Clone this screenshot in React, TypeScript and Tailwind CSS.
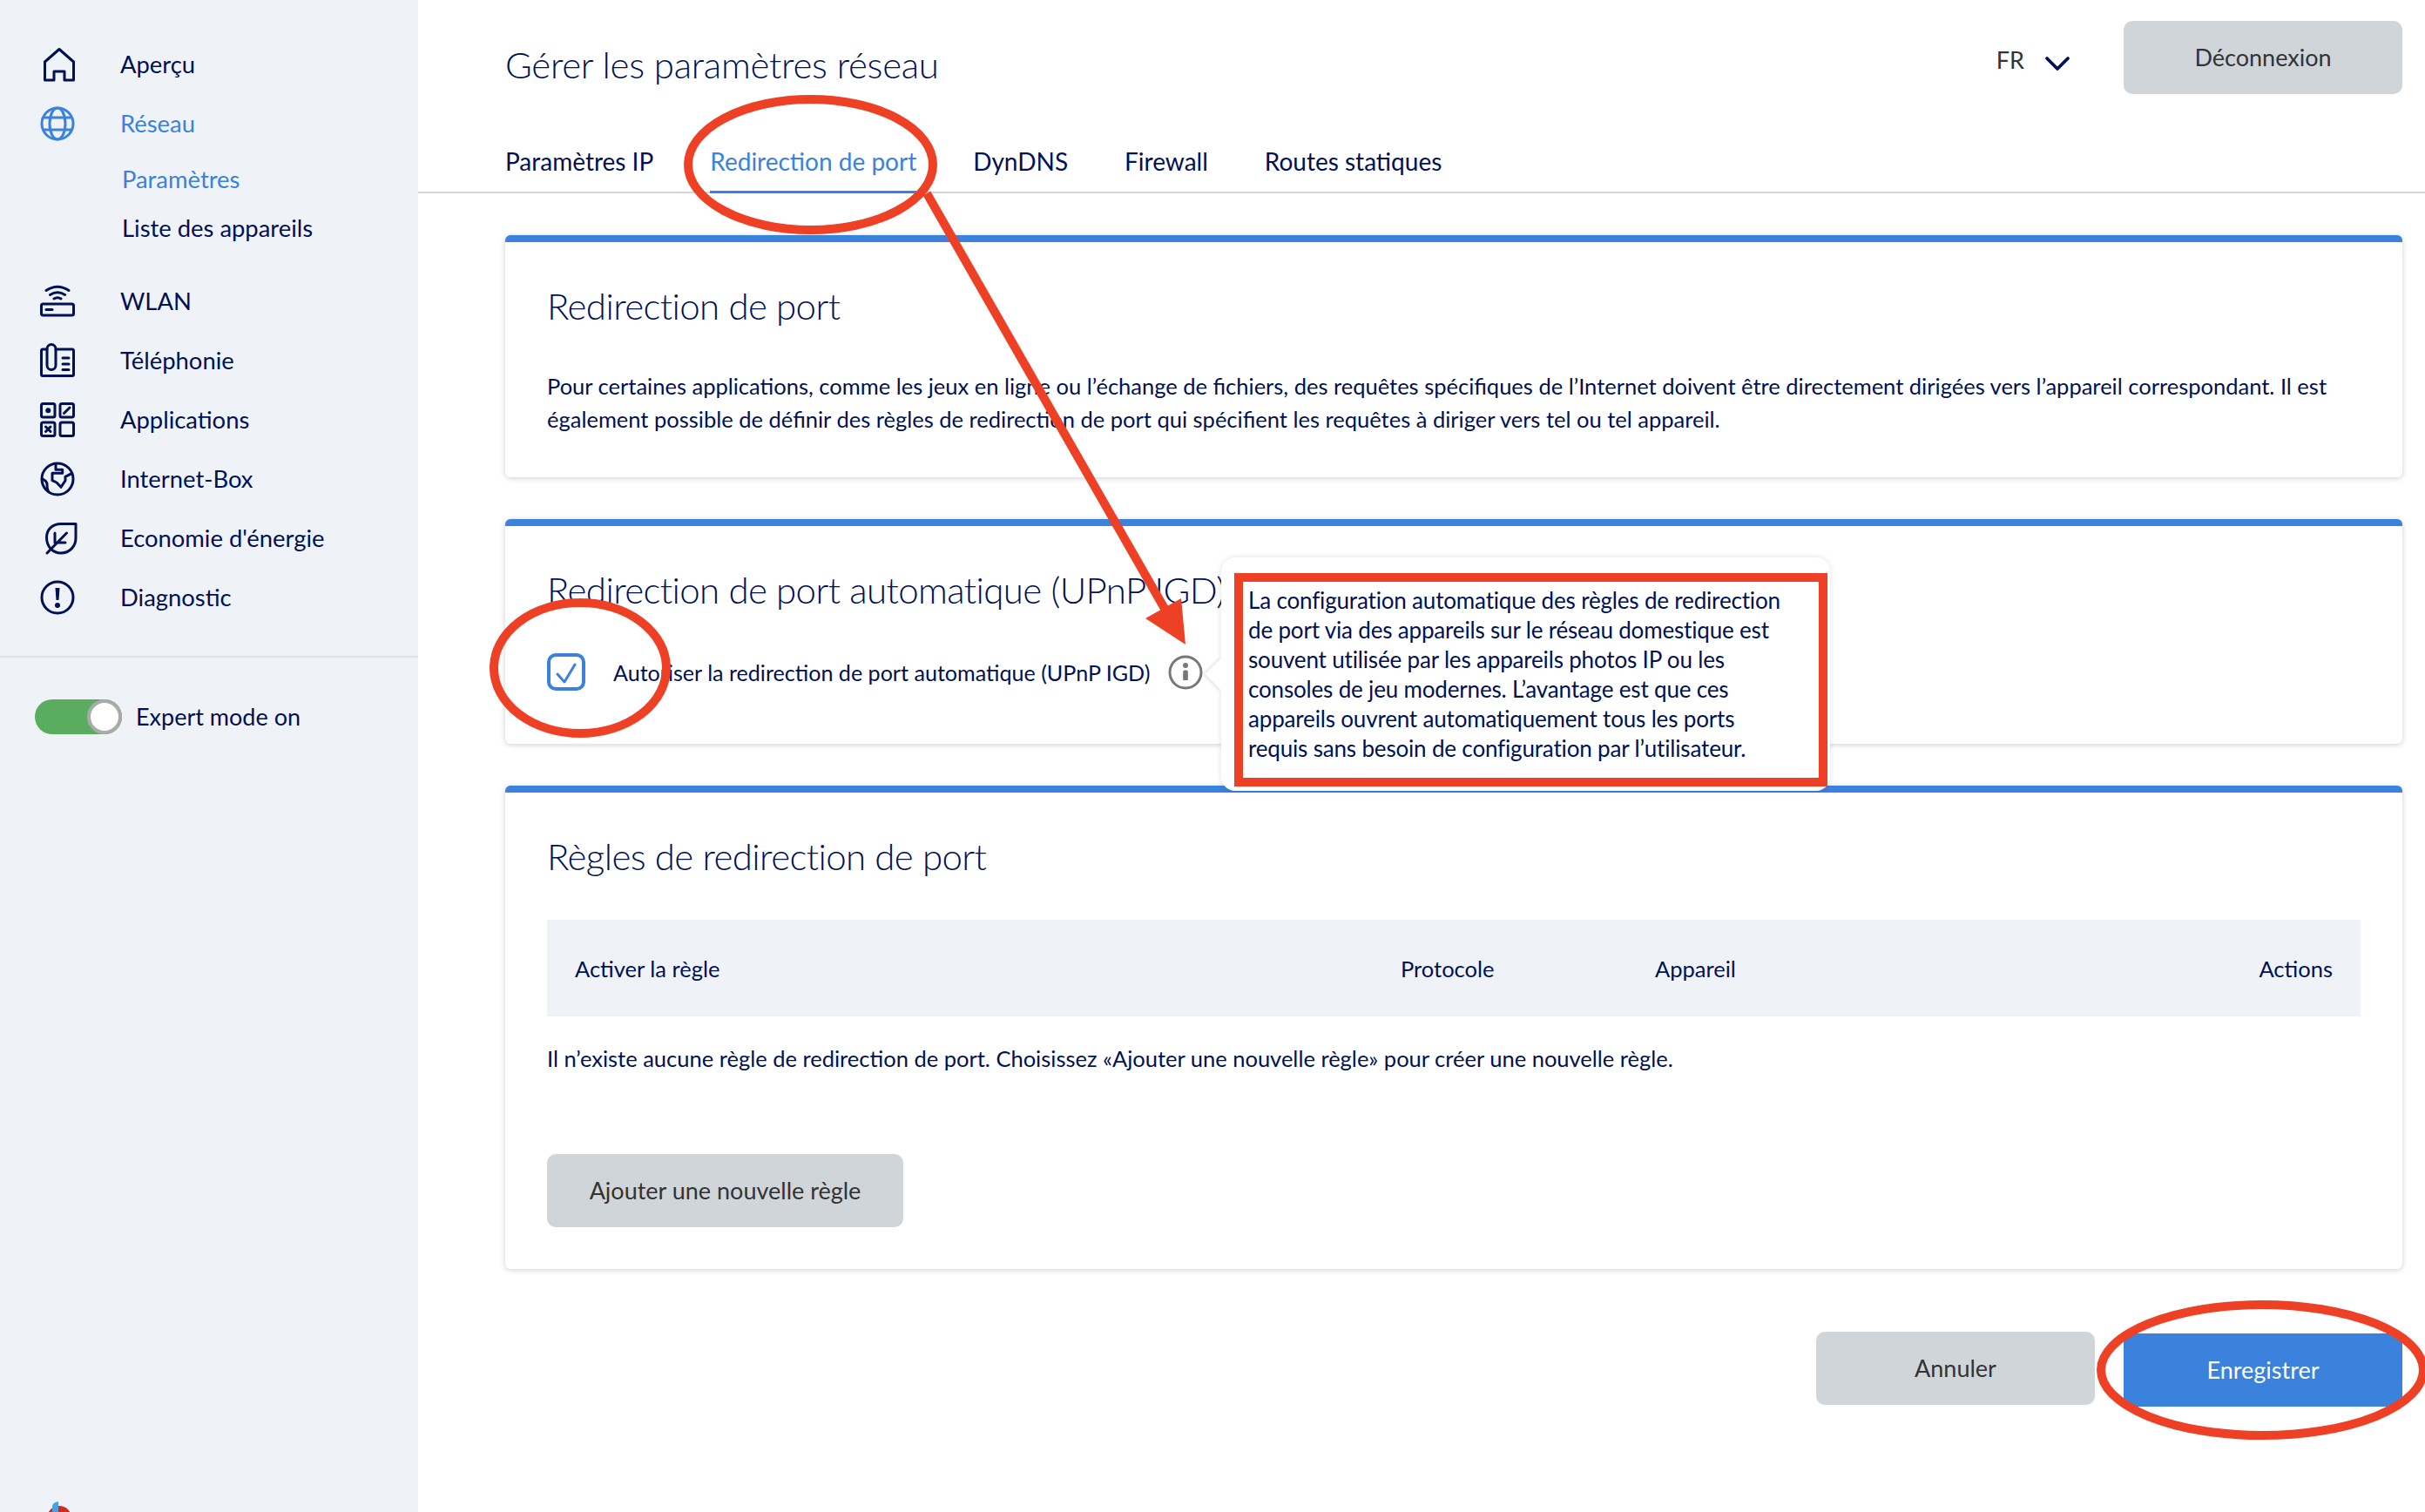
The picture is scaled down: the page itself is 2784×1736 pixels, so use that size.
import type { ReactNode } from 'react';
import { ChevronDown } from 'lucide-react';

const navy = '#001155';

function HomeIcon() {
  return (
    <svg width="40" height="40" viewBox="0 0 40 40" fill="none" stroke={navy} strokeWidth="3" strokeLinejoin="round">
      <path d="M22 2.5 L38.5 17 V38 H28 V28 H16 V38 H5.5 V17 Z" />
    </svg>
  );
}

function GlobeIcon() {
  return (
    <svg width="40" height="40" viewBox="0 0 40 40" fill="none" stroke="#3a82dc" strokeWidth="3">
      <circle cx="20" cy="20" r="18" />
      <ellipse cx="20" cy="20" rx="9" ry="18" />
      <path d="M4 13 H36 M4 27 H36" />
    </svg>
  );
}

function WlanIcon() {
  return (
    <svg width="40" height="40" viewBox="0 0 40 40" fill="none" stroke={navy} strokeWidth="3" strokeLinecap="round">
      <rect x="1.5" y="23" width="37" height="13" rx="2" />
      <path d="M7 29.5 H14" />
      <path d="M7 7.5 Q20 -1 33 7.5 M11.5 12.5 Q20 7 28.5 12.5 M16 17 Q20 14.5 24 17" />
    </svg>
  );
}

function PhoneIcon() {
  return (
    <svg width="40" height="40" viewBox="0 0 40 40" fill="none" stroke={navy} strokeWidth="3" strokeLinecap="round">
      <path d="M8 7 H3 Q1.5 7 1.5 9 V36 Q1.5 37.5 3 37.5 H37 Q38.5 37.5 38.5 36 V9 Q38.5 7 37 7 H18" />
      <rect x="8" y="1.5" width="10" height="29" rx="5" />
      <path d="M26 17 H33 M26 24 H33 M26 30.5 H33" />
    </svg>
  );
}

function AppsIcon() {
  return (
    <svg width="40" height="40" viewBox="0 0 40 40" fill="none" stroke={navy} strokeWidth="3">
      <rect x="1.5" y="1.5" width="15.5" height="15.5" rx="2" />
      <rect x="23" y="1.5" width="15.5" height="15.5" rx="2" />
      <rect x="1.5" y="23" width="15.5" height="15.5" rx="2" />
      <rect x="23" y="23" width="15.5" height="15.5" rx="2" />
      <circle cx="9.25" cy="9.25" r="3" fill={navy} stroke="none" />
      <path d="M27.5 12.5 L34 6 M6.5 28 L12 33.5 M12 28 L6.5 33.5" strokeLinecap="round" />
    </svg>
  );
}

function EarthIcon() {
  return (
    <svg width="40" height="40" viewBox="0 0 40 40" fill="none" stroke={navy} strokeWidth="3" strokeLinejoin="round">
      <circle cx="20" cy="20" r="18" />
      <path d="M18 2.5 V9.3 H25.7 V13.3 H14 V21.7 L19 24 L24 29.3 L29 21.7 V17.3 L36.7 13.3" />
      <path d="M1.5 19.3 Q8 22 8 26 Q8 32 10 35" />
    </svg>
  );
}

function LeafIcon() {
  return (
    <svg className="overflow-visible" width="40" height="40" viewBox="0 0 40 40" fill="none" stroke={navy} strokeWidth="3" strokeLinecap="round" strokeLinejoin="round">
      <path d="M41 3.5 H24 C14 3.5 7.5 10 7.5 19 C7.5 30 15 37 24 37 C34 37 41 29 41 20 Z" />
      <path d="M8 37 L30.5 14 M17 14 V25 H29" />
    </svg>
  );
}

function AlertIcon() {
  return (
    <svg width="40" height="40" viewBox="0 0 40 40" fill="none" stroke={navy} strokeWidth="3">
      <circle cx="20" cy="20" r="18" />
      <path d="M17.5 9 H22.5 L21.5 23 H18.5 Z" fill={navy} stroke="none" />
      <circle cx="20" cy="29" r="3" fill={navy} stroke="none" />
    </svg>
  );
}

function InfoIcon() {
  return (
    <svg width="40" height="40" viewBox="0 0 40 40" fill="none" stroke="#777777" strokeWidth="3">
      <circle cx="20" cy="20" r="18" />
      <circle cx="20" cy="12" r="3" fill="#777777" stroke="none" />
      <path d="M17.2 19 Q17.2 17.5 19 17.5 H21 Q22.8 17.5 22.8 19 V29 H17.2 Z" fill="#777777" stroke="none" />
    </svg>
  );
}

function NavItem({ icon, label, active }: { icon: ReactNode; label: string; active?: boolean }) {
  return (
    <div className={`flex h-[68px] items-center gap-[52px] pl-[46px] ${active ? 'text-[#3a82dc]' : 'text-[#001155]'}`}>
      <span className="flex h-[40px] w-[40px] shrink-0">{icon}</span>
      <span>{label}</span>
    </div>
  );
}

function Card({ title, children, className }: { title: string; children: ReactNode; className: string }) {
  return (
    <section className={`rounded-[6px] border-t-[8px] border-[#3a82dc] bg-white px-[48px] pt-[43px] text-[25.5px] shadow-[0_1px_6px_rgba(0,0,0,0.2)] ${className}`}>
      <h2 className="h-[60px] text-[42px] leading-[60px] font-light tracking-[-0.6px] whitespace-nowrap text-[#001155]">{title}</h2>
      {children}
    </section>
  );
}

export default function App() {
  return (
    <div className="relative flex h-[1736px] w-[2784px] overflow-hidden bg-white font-['Lato',sans-serif] text-[27px] leading-[38px] text-[#001155]">
      <aside className="relative flex w-[480px] shrink-0 flex-col bg-[#eff3f7] pt-[40px] text-[27.4px]">
        <NavItem icon={<HomeIcon />} label="Aperçu" />
        <NavItem icon={<GlobeIcon />} label="Réseau" active />
        <div className="mt-[2px] pl-[140px]">
          <div className="flex h-[56px] items-center text-[#3a82dc]">Paramètres</div>
          <div className="flex h-[56px] items-center">Liste des appareils</div>
        </div>
        <div className="mt-[22px]">
          <NavItem icon={<WlanIcon />} label="WLAN" />
          <NavItem icon={<PhoneIcon />} label="Téléphonie" />
          <NavItem icon={<AppsIcon />} label="Applications" />
          <NavItem icon={<EarthIcon />} label="Internet-Box" />
          <NavItem icon={<LeafIcon />} label="Economie d'énergie" />
          <NavItem icon={<AlertIcon />} label="Diagnostic" />
        </div>
        <div className="mt-[33px] h-[2px] bg-[#dfe3e6]" />
        <div className="mt-[48px] flex items-center gap-[16px] pl-[40px] text-[27px]">
          <div className="flex h-[40px] w-[100px] justify-end rounded-full bg-[#5aad5e]">
            <div className="h-[40px] w-[40px] rounded-full border-[4px] border-[#aaaaaa] bg-white" />
          </div>
          <span>Expert mode on</span>
        </div>
        <svg className="absolute bottom-0 left-[50px]" width="40" height="12" viewBox="0 0 40 12">
          <circle cx="18" cy="19" r="14" fill="#d5281f" />
          <path d="M10 12 V6 Q10 1 17 0 V12 Z" fill="#4c9fe0" />
        </svg>
      </aside>

      <main className="flex min-w-0 flex-1 flex-col">
        <header className="flex h-[222px] flex-col justify-between border-b-2 border-[#d5d5d5] pr-[26px] pl-[100px]">
          <div className="flex items-start justify-between pt-[24px]">
            <h1 className="mt-[20px] text-[42px] leading-[60px] font-light tracking-[-0.3px]">Gérer les paramètres réseau</h1>
            <div className="flex items-center gap-[52px]">
              <div className="mt-[6px] flex items-center gap-[14px] text-[#333333]">
                <span>FR</span>
                <ChevronDown size={48} strokeWidth={1.9} className="mt-[8px] text-[#001155]" />
              </div>
              <button className="h-[84px] w-[320px] rounded-[10px] bg-[#d0d5d9] text-[#333333]">Déconnexion</button>
            </div>
          </div>
          <nav className="-mb-[2px] flex gap-[65px] text-[28px]">
            <a className="border-b-[3px] border-transparent pb-[15px]">Paramètres IP</a>
            <a className="border-b-[3px] border-[#3a82dc] pb-[15px] text-[#3a82dc]">Redirection de port</a>
            <a className="border-b-[3px] border-transparent pb-[15px]">DynDNS</a>
            <a className="border-b-[3px] border-transparent pb-[15px]">Firewall</a>
            <a className="border-b-[3px] border-transparent pb-[15px]">Routes statiques</a>
          </nav>
        </header>

        <div className="flex flex-col gap-[48px] pt-[48px] pr-[26px] pl-[100px]">
          <Card title="Redirection de port" className="pb-[48px]">
            <p className="mt-[43px] whitespace-nowrap">
              Pour certaines applications, comme les jeux en ligne ou l’échange de fichiers, des requêtes spécifiques de l’Internet doivent être directement dirigées vers l’appareil correspondant. Il est
              <br />
              également possible de définir des règles de redirection de port qui spécifient les requêtes à diriger vers tel ou tel appareil.
            </p>
          </Card>

          <Card title="Redirection de port automatique (UPnP IGD)" className="pb-[61px]">
            <div className="mt-[43px] flex h-[43px] items-center">
              <span className="flex h-[43px] w-[44px] items-center justify-center rounded-[10px] border-[4px] border-[#3a82dc]">
                <svg width="36" height="35" viewBox="0 0 36 35" fill="none" stroke="#3a82dc" strokeWidth="3" strokeLinecap="round" strokeLinejoin="round">
                  <path d="M8 20 L16 29 L28 9" />
                </svg>
              </span>
              <span className="ml-[32px] text-[25.1px]">Autoriser la redirection de port automatique (UPnP IGD)</span>
              <span className="ml-[21px] flex"><InfoIcon /></span>
            </div>
          </Card>

          <Card title="Règles de redirection de port" className="pb-[48px]">
            <div className="mt-[43px] grid h-[111px] grid-cols-[948px_292px_1fr_auto] items-center bg-[#eff3f7] px-[32px]">
              <span>Activer la règle</span>
              <span>Protocole</span>
              <span>Appareil</span>
              <span>Actions</span>
            </div>
            <p className="mt-[29px]">Il n’existe aucune règle de redirection de port. Choisissez «Ajouter une nouvelle règle» pour créer une nouvelle règle.</p>
            <button className="mt-[91px] h-[84px] w-[409px] rounded-[10px] bg-[#d0d5d9] text-[27px] text-[#333333]">Ajouter une nouvelle règle</button>
          </Card>

          <div className="mt-[24px] flex items-start justify-end gap-[33px]">
            <button className="h-[84px] w-[320px] rounded-[10px] bg-[#d0d5d9] text-[#333333]">Annuler</button>
            <button className="mt-[2px] h-[84px] w-[320px] bg-[#3a82dc] text-white">Enregistrer</button>
          </div>
        </div>
      </main>

      {/* tooltip above the second card */}
      <div className="absolute top-[640px] left-[1402px] h-[268px] w-[699px] rounded-[16px] bg-white pt-[32px] pl-[31px] text-[26px] leading-[34px] tracking-[-0.17px] shadow-[0_0_6px_rgba(0,0,0,0.12)]">
        <div className="absolute top-[121px] -left-[13px] h-[26px] w-[26px] rotate-45 bg-white shadow-[-2px_2px_4px_rgba(0,0,0,0.1)]" />
        <p className="relative whitespace-nowrap">
          La configuration automatique des règles de redirection
          <br />
          de port via des appareils sur le réseau domestique est
          <br />
          souvent utilisée par les appareils photos IP ou les
          <br />
          consoles de jeu modernes. L’avantage est que ces
          <br />
          appareils ouvrent automatiquement tous les ports
          <br />
          requis sans besoin de configuration par l’utilisateur.
        </p>
      </div>

      {/* red annotations drawn on the screenshot */}
      <svg className="pointer-events-none absolute inset-0" width="2784" height="1736" viewBox="0 0 2784 1736" fill="none" stroke="#ee4025" strokeWidth="10">
        <ellipse cx="930.5" cy="189" rx="140.5" ry="75" />
        <ellipse cx="666" cy="767" rx="99" ry="75" />
        <ellipse cx="2597" cy="1573" rx="185" ry="75" />
        <path d="M1064 222 L1340 704" />
        <path d="M1361 740 L1315 710 L1356 687 Z" fill="#ee4025" stroke="none" />
        <rect x="1422" y="663" width="671" height="235" />
      </svg>
    </div>
  );
}
